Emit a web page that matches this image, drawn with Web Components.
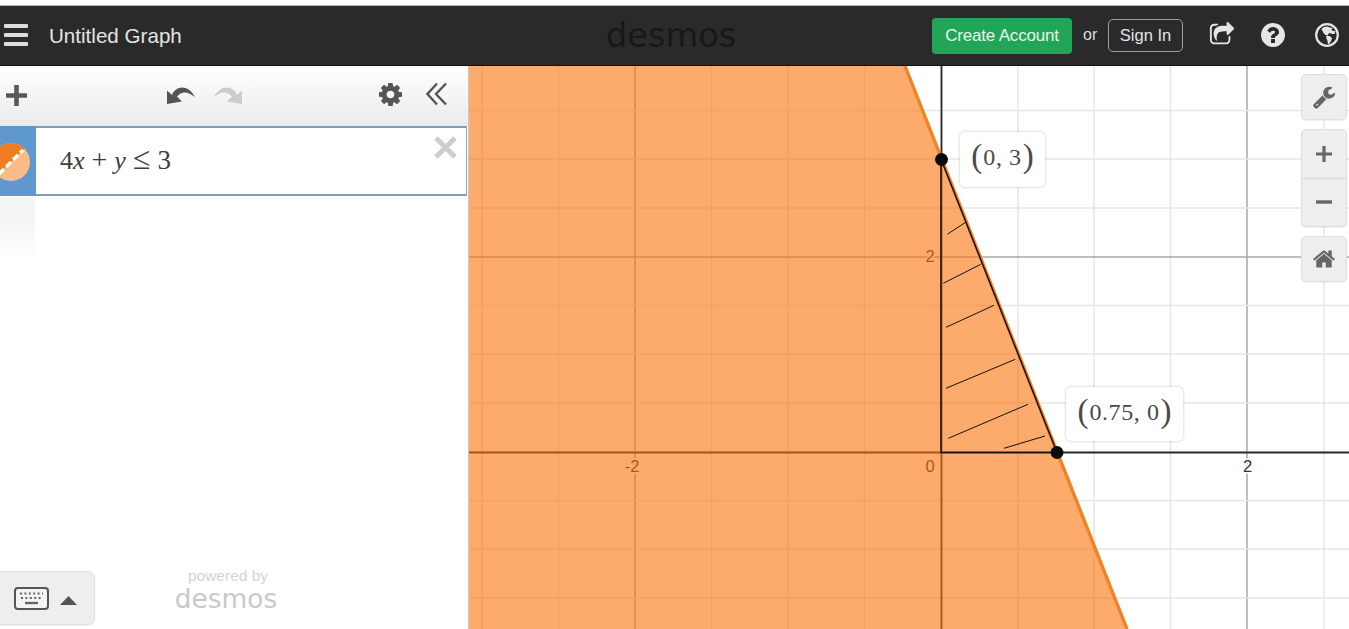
<!DOCTYPE html>
<html><head><meta charset="utf-8">
<style>
html,body{margin:0;padding:0;height:100%;overflow:hidden;background:#fff}
body{font-family:"Liberation Sans",Arial,sans-serif}
</style>
</head><body>
<dcg-app>
  <dcg-header slot="header"></dcg-header>
  <dcg-sidebar slot="side">
    <dcg-toolbar slot="top"></dcg-toolbar>
    <dcg-expression slot="top"></dcg-expression>
    <dcg-footer slot="footer"></dcg-footer>
  </dcg-sidebar>
  <dcg-graph slot="graph">
    <dcg-point-label style="left:491px;top:66px;width:85px;height:55px"><span class="p">(</span><span class="n">0, 3</span><span class="p">)</span></dcg-point-label>
    <dcg-point-label style="left:597px;top:321px;width:117px;height:54px"><span class="p">(</span><span class="n">0.75, 0</span><span class="p">)</span></dcg-point-label>
    <dcg-controls></dcg-controls>
  </dcg-graph>
</dcg-app>
<script>
const ICONS={
cog:'M1152 896q0-106-75-181t-181-75-181 75-75 181 75 181 181 75 181-75 75-181zm512-109v222q0 12-8 23t-20 13l-185 28q-19 54-39 91 35 50 107 138 10 12 10 25t-9 23q-27 37-99 108t-94 71q-12 0-26-9l-138-108q-44 23-91 38-16 136-29 186-7 28-36 28h-222q-14 0-24.5-8.5t-11.5-21.5l-28-184q-49-16-90-37l-141 107q-10 9-25 9-14 0-25-11-126-114-165-168-7-10-7-23 0-12 8-23 15-21 51-66.5t54-70.5q-27-50-41-99l-183-27q-13-2-21-12.5t-8-23.5v-222q0-12 8-23t19-13l186-28q14-46 39-92-40-57-107-138-10-12-10-24 0-10 9-23 26-36 98.5-107.5t94.5-71.5q13 0 26 10l138 107q44-23 91-38 16-136 29-186 7-28 36-28h222q14 0 24.5 8.5t11.5 21.5l28 184q49 16 90 37l142-107q9-9 24-9 13 0 25 10 129 119 165 170 7 8 7 22 0 12-8 23-15 21-51 66.5t-54 70.5q26 50 41 98l183 28q13 2 21 12.5t8 23.5z',
help:'M1024 1376v-192q0-14-9-23t-23-9h-192q-14 0-23 9t-9 23v192q0 14 9 23t23 9h192q14 0 23-9t9-23zm256-672q0-88-55.5-163t-138.5-116-170-41q-243 0-371 213-15 24 8 42l132 100q7 6 19 6 16 0 25-12 53-68 86-92 34-24 86-24 48 0 85.5 26t37.5 59q0 38-20 61t-68 45q-63 28-115.5 86.5t-52.5 125.5v36q0 14 9 23t23 9h192q14 0 23-9t9-23q0-19 21.5-49.5t54.5-49.5q32-18 49-28.5t46-35 44.5-48 28-60.5 12.5-81zm384 192q0 209-103 385.5t-279.5 279.5-385.5 103-385.5-103-279.5-279.5-103-385.5 103-385.5 279.5-279.5 385.5-103 385.5 103 279.5 279.5 103 385.5z',
home:'M1472 992v480q0 26-19 45t-45 19h-384v-384h-256v384h-384q-26 0-45-19t-19-45v-480q0-1 .5-3t.5-3l575-474 575 474q1 2 1 6zm223-69l-62 74q-8 9-21 11h-3q-13 0-21-7l-692-577-692 577q-12 8-24 7-13-2-21-11l-62-74q-8-10-7-23.5t11-21.5l719-599q32-26 76-26t76 26l244 204v-195q0-14 9-23t23-9h192q14 0 23 9t9 23v408l219 182q10 8 11 21.5t-7 23.5z',
wrench:'M448 1472q0-26-19-45t-45-19-45 19-19 45 19 45 45 19 45-19 19-45zm644-420l-682 682q-37 37-90 37-52 0-91-37l-106-108q-38-36-38-90 0-53 38-91l681-681q39 98 114.5 173.5t173.5 114.5zm634-435q0 39-23 106-47 134-164.5 217.5t-258.5 83.5q-185 0-316.5-131.5t-131.5-316.5 131.5-316.5 316.5-131.5q58 0 121.5 16.5t107.5 46.5q16 11 16 28t-16 28l-293 169v224l193 107q5-3 79-48.5t135.5-81 70.5-35.5q15 0 23.5 10t8.5 25z',
share:'M1472 989v259q0 119-84.5 203.5t-203.5 84.5h-832q-119 0-203.5-84.5t-84.5-203.5v-832q0-119 84.5-203.5t203.5-84.5h255q13 0 22.5 9.5t9.5 22.5q0 27-26 32-77 26-133 60-10 4-16 4h-112q-66 0-113 47t-47 113v832q0 66 47 113t113 47h832q66 0 113-47t47-113v-214q0-19 18-29 28-13 54-37 16-16 35-8 21 9 21 29zm237-496l-384 384q-18 19-45 19-12 0-25-5-39-17-39-59v-192h-160q-323 0-438 131-119 137-74 473 3 23-20 34-8 2-12 2-16 0-26-13-10-14-21-31t-39.5-68.5-49.5-99.5-38.5-114-17.5-122q0-49 3.5-91t14-90 28-88 47-81.5 68.5-74 94.5-61.5 124.5-48.5 159.5-30.5 196.5-11h160v-192q0-42 39-59 13-5 25-5 26 0 45 19l384 384q19 19 19 45t-19 45z'
};
function fa(n,s,c,extra){return `<svg width="${s}" height="${s}" viewBox="0 0 1792 1792" style="display:block;${extra||''}"><path fill="${c}" d="${ICONS[n]}"/></svg>`}
function def(name,html,init){
  customElements.define(name,class extends HTMLElement{
    constructor(){super();this.attachShadow({mode:'open'}).innerHTML=html;if(init)init(this.shadowRoot,this)}
  });
}
def('dcg-app',`<style>
:host{display:flex;flex-direction:column;height:629px;width:1349px;overflow:hidden;background:#fff}
.strip{height:5px;flex:none;background:#fff;border-bottom:1px solid #b5b5b5}
.main{flex:1;display:flex;min-height:0}
</style>
<div class="strip"></div>
<slot name="header"></slot>
<div class="main"><slot name="side"></slot><slot name="graph"></slot></div>`);

def('dcg-header',`<style>
:host{display:flex;align-items:center;height:60px;flex:none;background:#2a2a2a;color:#e4e4e4;box-sizing:border-box;font:20px "Liberation Sans",Arial,sans-serif;border-bottom:1px solid #111;position:relative}
.burger{width:24px;margin-left:4px;display:flex;flex-direction:column;gap:5px;position:relative;top:-1px}
.burger i{display:block;height:4px;background:#ddd;border-radius:1px}
.title{margin-left:21px;width:134px;white-space:nowrap;font-size:20.6px}
.logo{margin-left:423px;width:132px;font:33.6px "DejaVu Sans",sans-serif;color:#181818;line-height:1;position:relative;white-space:nowrap}
.create{margin-left:194px;width:140px;height:36px;background:#20a656;border-radius:4px;color:#e9f6ee;font-size:17px;letter-spacing:-.2px;display:flex;align-items:center;justify-content:center}
.or{margin-left:11px;width:25px;font-size:16px;color:#ddd;position:relative;top:-1px}
.sign{width:73px;height:31px;border:1px solid #a0a0a0;border-radius:5px;font-size:16.5px;display:flex;align-items:center;justify-content:center;color:#e4e4e4}
.ic{display:flex;align-items:center;position:relative;top:-1px}
.ic1{margin-left:26px}.ic2{margin-left:24px}.ic3{margin-left:28px}
</style>
<div class="burger"><i></i><i></i><i></i></div>
<div class="title">Untitled Graph</div>
<div class="logo">desmos</div>
<div class="create">Create Account</div>
<div class="or">or</div>
<div class="sign">Sign In</div>
<div class="ic ic1">${fa('share',26,'#e6e6e6')}</div>
<div class="ic ic2">${fa('help',28,'#e6e6e6')}</div>
<div class="ic ic3"><svg width="24" height="24" viewBox="0 0 24 24" style="display:block">
<circle cx="12" cy="12" r="10.8" fill="none" stroke="#e6e6e6" stroke-width="2.2"/>
<path fill="#e6e6e6" d="M6.5 6 9 4 12 3.5 15 4.5 17.5 5 16.5 7 18 8 20.5 8 19.5 11 17 11 15 10 13.5 10.5 13 12.5 10.5 12 8.5 10Z"/>
<path fill="#e6e6e6" d="M11 13 14.5 13 17 15 16 18 14.5 20.5 13 21 12.5 18 11.5 15.5Z"/>
</svg></div>`);

def('dcg-sidebar',`<style>
:host{display:flex;flex-direction:column;width:469px;flex:none;height:100%;box-sizing:border-box;border-right:1px solid #c9c9c9;background:#fff;position:relative;overflow:hidden}
.empty{margin-top:1px;height:64px;width:35px;background:linear-gradient(#f5f5f5 35%,#fff);flex:none}
</style>
<slot name="top"></slot>
<div class="empty"></div>
<slot name="footer"></slot>`);

def('dcg-toolbar',`<style>
:host{display:flex;align-items:center;height:60px;flex:none;box-sizing:border-box;background:linear-gradient(#fff,#e9eaea);padding-bottom:4px}
.plus{margin-left:5px;width:23px;height:23px;flex:none;margin-top:3px}
.undo{margin-left:139px;margin-top:1px}.redo{margin-left:19px;margin-top:1px}.cog{margin-left:135px}.dbl{margin-left:22px}
svg{display:block}
</style>
<svg class="plus" viewBox="0 0 23 23"><path d="M11.5 1V22M1 11.5H22" stroke="#595959" stroke-width="4.6"/></svg>
<svg class="undo" width="28" height="18" viewBox="0 0 28 18"><path fill="#555" d="M0 18V4.5L5 9C9-.5 21-2 28 11 21 5.5 15 4.5 10 10.5L15 15.5Z"/></svg>
<svg class="redo" width="28" height="18" viewBox="0 0 28 18"><path fill="#ccc" d="M28 18V4.5L23 9C19-.5 7-2 0 11 7 5.5 13 4.5 18 10.5L13 15.5Z"/></svg>
<svg class="cog" width="27" height="27" viewBox="0 0 1792 1792"><path fill="#555" d="${ICONS.cog}"/></svg>
<svg class="dbl" width="23" height="24" viewBox="0 0 23 24"><path fill="none" stroke="#555" stroke-width="2.4" d="M11 1.5 1.5 12 11 22.5M20 1.5 10 12l10 10.5"/></svg>`);

def('dcg-expression',`<style>
:host{display:flex;height:70px;flex:none;box-sizing:border-box;border-top:2px solid #7d9fb8;border-bottom:2px solid #7d9fc4;background:#fff;position:relative;margin-right:1px;border-right:1px solid #8aa}
.tab{width:36px;flex:none;background:#5f98cf;margin:-2px 0;position:relative;overflow:hidden}
.tab svg{position:absolute;left:-8px;top:17px}
.math{margin-left:24px;font:26px "Liberation Serif","Times New Roman",serif;color:#3d3d3d;display:flex;align-items:baseline;height:66px;line-height:64px;white-space:nowrap}
.math i{font-style:italic}
.plus{margin:0 7px 0 7px;font-size:28px;line-height:0}
.le{margin:0 7px 0 7px;font-size:32px;line-height:0}
.three{font-size:27px}
.x{position:absolute;right:9px;top:8px;display:block}
</style>
<div class="tab"><svg width="38" height="38" viewBox="0 0 38 38">
<defs><clipPath id="c"><circle cx="19" cy="19" r="19"/></clipPath></defs>
<g clip-path="url(#c)"><rect width="38" height="38" fill="#f9bc88"/><path d="M0 0H38V0L0 38Z" fill="#f17d22"/>
<path d="M7 31 31 7" stroke="#fff" stroke-width="3.5" stroke-dasharray="7 3" fill="none"/></g></svg></div>
<div class="math"><span>4</span><i>x</i><span class="plus">+</span><i>y</i><span class="le">≤</span><span class="three">3</span></div>
<svg class="x" width="23" height="23" viewBox="0 0 23 23"><path d="M2 2 21 21M21 2 2 21" stroke="#cdcdcd" stroke-width="5"/></svg>`);

def('dcg-footer',`<style>
:host{display:flex;align-items:flex-end;margin-top:auto;flex:none;height:58px;padding-bottom:4px;box-sizing:border-box;position:relative}
.kbd{margin-left:-8px;width:103px;height:54px;box-sizing:border-box;background:#eee;border:1px solid #ddd;border-radius:7px;display:flex;align-items:center;box-shadow:0 1px 1px rgba(0,0,0,.05)}
.kbd svg{display:block}
.k{margin-left:21px}.c{margin-left:11px;margin-top:4px}
.pw{margin-left:80px;width:102px;display:flex;flex-direction:column;align-items:center;height:58px;box-sizing:border-box;justify-content:flex-end;padding-bottom:11px}
.pw span{font-size:15.5px;line-height:13px;color:#d4d4d4;margin-left:4px}
.pw b{font:400 26.4px/30px "DejaVu Sans",sans-serif;color:#c9c9c9;white-space:nowrap;margin-top:2px}
</style>
<div class="kbd">
<svg class="k" width="35" height="23" viewBox="0 0 35 23"><rect x="1" y="1" width="33" height="21" rx="3" fill="#f4f4f4" stroke="#555" stroke-width="2"/>
<path d="M6 6.5H29M7 11H28" stroke="#666" stroke-width="2" stroke-dasharray="2 2.4"/><path d="M11 16H24" stroke="#666" stroke-width="2.4"/></svg>
<svg class="c" width="17" height="9" viewBox="0 0 17 9"><path d="M8.5 0 17 9H0Z" fill="#555"/></svg>
</div>
<div class="pw"><span>powered by</span><b>desmos</b></div>`);

def('dcg-point-label',`<style>
:host{position:absolute;display:flex;align-items:center;justify-content:center;background:#fff;border-radius:5px;box-shadow:0 0 3px rgba(0,0,0,.25);box-sizing:border-box;font:24px "Liberation Serif","Times New Roman",serif;color:#4a4a4a;white-space:nowrap;padding-bottom:4px}
::slotted(.p){font-size:33px;margin:0 1px;position:relative;top:-1px}
::slotted(.n){letter-spacing:.6px}
</style><slot></slot>`);

def('dcg-controls',`<style>
:host{position:absolute;right:2px;top:8px;display:flex;flex-direction:column;gap:9px;width:46px}
.b{background:#eee;border:1px solid #dedede;border-radius:5px;box-sizing:border-box;display:flex;align-items:center;justify-content:center;height:46px;box-shadow:0 1px 1px rgba(0,0,0,.06)}
.g{height:98px;flex-direction:column;justify-content:flex-start}
.g div{height:48px;width:100%;display:flex;align-items:center;justify-content:center}
.g div+div{border-top:1px solid #d8d8d8}
svg{display:block}
</style>
<div class="b">${fa('wrench',24,'#666')}</div>
<div class="b g"><div><svg width="16" height="16" viewBox="0 0 16 16"><path d="M8 0V16M0 8H16" stroke="#666" stroke-width="3.2"/></svg></div><div><svg width="16" height="4" viewBox="0 0 16 4"><path d="M0 2H16" stroke="#666" stroke-width="3.4"/></svg></div></div>
<div class="b">${fa('home',24,'#666')}</div>`);

def('dcg-graph',`<style>
:host{display:block;flex:1;min-width:0;height:100%;position:relative;overflow:hidden;background:#fff}
svg{position:absolute;left:0;top:0;display:block}
text{font:16.5px "Liberation Sans",Arial,sans-serif;fill:#333;paint-order:stroke;stroke:#fff;stroke-width:3px;text-anchor:middle}
</style>
<svg id="s" width="880" height="563" viewBox="469 66 880 563"></svg><slot></slot>`,(r)=>{
  const L=469,R=1349,T=66,B=629;let o='';
  const xs=[482,558.5,635,711.5,788,864.5,941,1018,1094,1170.5,1247,1324];
  const ys=[110.5,159,208,257,305.5,354,403,452,500.5,549,598];
  for(const x of xs){const maj=(x==635||x==1247);o+=`<path d="M${x} ${T}V${B}" stroke="${maj?'#a8a8a8':'#e6e6e6'}" stroke-width="1.5"/>`}
  for(const y of ys){const maj=(y==257);o+=`<path d="M${L} ${y}H${R}" stroke="${maj?'#a8a8a8':'#e6e6e6'}" stroke-width="1.5"/>`}
  o+=`<path d="M941.5 ${T}V${B}" stroke="#2b2b2b" stroke-width="1.8"/><path d="M${L} 452.5H${R}" stroke="#2b2b2b" stroke-width="2"/>`;
  o+=`<text x="632" y="472">-2</text><text x="930" y="472">0</text><text x="1247.5" y="472">2</text><text x="930" y="262">2</text>`;
  o+=`<path d="M${L} ${T}H905L1127 ${B}H${L}Z" fill="rgb(250,115,10)" fill-opacity=".6"/>`;
  o+=`<path d="M905 ${T}L1127 ${B}" stroke="#ee8426" stroke-width="3.4" fill="none"/>`;
  o+=`<path d="M941 159V452.5H1057L941 159Z" fill="none" stroke="#111" stroke-width="1.5"/>`;
  for(const s of [[947.3,234.3,966,222],[943.3,283.3,980.7,264.3],[946,327.3,994,305.3],[946,388.3,1015.3,359.3],[948.3,438.3,1028,404.3],[1004,448.3,1045,436]])
    o+=`<path d="M${s[0]} ${s[1]}L${s[2]} ${s[3]}" stroke="#111" stroke-width="1"/>`;
  o+=`<circle cx="941.5" cy="159.5" r="6.5" fill="#0a0a0a"/><circle cx="1057" cy="452.5" r="6.5" fill="#0a0a0a"/>`;
  r.getElementById('s').innerHTML=o;
});
</script>
</body></html>
